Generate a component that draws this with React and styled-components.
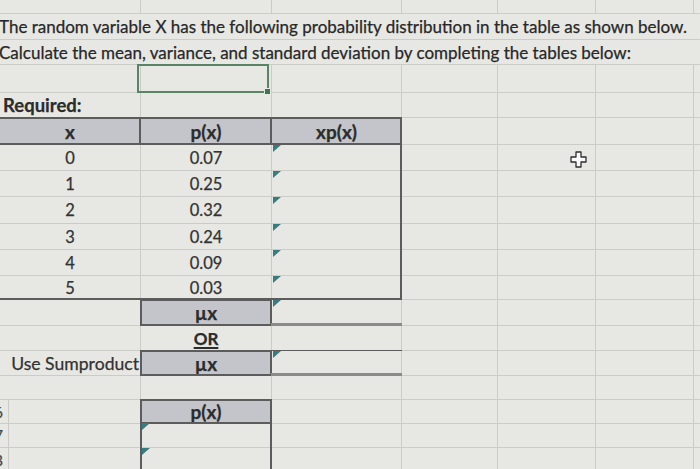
import React from 'react';
import styled, { createGlobalStyle, css } from 'styled-components';

const GRID = '#cbcbc7';
const DARK = '#5c5c5c';
const FILL = '#c3c5ca';
const TEAL = '#3a7b80';
const BG = '#e7e7e3';
const COLS = '9px 132px 131px 130px 96px 98px 98px 1fr';

const GlobalStyle = createGlobalStyle`
  html, body { margin: 0; padding: 0; background: ${BG}; }
  body {
    width: 700px; height: 469px; overflow: hidden;
    font-family: Lato, "Open Sans", sans-serif; color: #303030;
    -webkit-text-stroke: 0.25px currentColor;
  }
`;

const Sheet = styled.div`
  display: flex;
  flex-direction: column;
  width: 700px;
`;

const Row = styled.div`
  display: grid;
  grid-template-columns: ${COLS};
  height: ${(p) => p.$h}px;
  flex: none;
`;

const Cell = styled.div`
  position: relative;
  box-sizing: border-box;
  min-width: 0;
  grid-column: ${(p) => (p.$wide ? '1 / span 2' : 'auto')};
  display: flex;
  align-items: center;
  justify-content: ${(p) => (p.$align === 'right' ? 'flex-end' : p.$align === 'left' ? 'flex-start' : 'center')};
  padding: 0 ${(p) => (p.$align === 'right' ? 1 : 0)}px 0 ${(p) => (p.$align === 'left' ? 3 : 0)}px;
  border-right: 1px solid ${(p) => (p.$noRight ? 'transparent' : GRID)};
  border-bottom: 1px solid ${GRID};
  background: ${(p) => (p.$fill ? FILL : 'transparent')};
  font-size: ${(p) => (p.$bold ? 19 : 16.5)}px;
  font-weight: ${(p) => (p.$bold ? 700 : 400)};
  white-space: nowrap;
  color: ${(p) => (p.$bold ? '#2c2c2c' : '#333')};

  &::after {
    content: '';
    position: absolute;
    inset: -1px;
    pointer-events: none;
    border-style: solid;
    border-color: ${DARK};
    border-width: ${(p) => `${p.$bt || 0}px ${p.$br || 0}px ${p.$bb || 0}px ${p.$bl || 0}px`};
    ${(p) => p.$dbl && css`border-bottom: 3px solid #8b8b8b;`}
  }

  ${(p) =>
    p.$tri &&
    css`
      &::before {
        content: '';
        position: absolute;
        top: 0;
        left: 1px;
        width: 0;
        height: 0;
        border-top: 7px solid ${TEAL};
        border-right: 8px solid transparent;
      }
    `}
`;

const RowHead = styled(Cell)`
  overflow: hidden;
  justify-content: flex-end;
  padding-right: 5px;
  font-size: 15px;
  color: #444;
`;

const TitleCell = styled(Cell)`
  grid-column: 1 / -1;
  justify-content: flex-start;
  margin-left: -1px;
  font-size: 17px;
  color: #282828;
  overflow: visible;
`;

const Label = styled(Cell)`
  font-size: 18.5px;
`;

const SumLabel = styled(Cell)`
  font-size: 17.6px;
`;

const Underlined = styled.span`
  text-decoration: underline;
  text-decoration-thickness: 1.5px;
  text-underline-offset: 2px;
  font-size: 17px;
`;

const SelectBox = styled.div`
  position: absolute;
  inset: -1px 2px -1px -4px;
  border: 2px solid #5a8466;
  pointer-events: none;
`;

const Handle = styled.div`
  position: absolute;
  right: -4px;
  bottom: -4px;
  width: 5px;
  height: 5px;
  background: #3f7552;
  border: 1px solid ${BG};
`;

const CursorWrap = styled.div`
  position: absolute;
  right: 8px;
  top: 6px;
  width: 17px;
  height: 17px;
`;

function Cursor() {
  return (
    <CursorWrap>
      <svg width="17" height="17" viewBox="0 0 17 17">
        <polygon
          points="6,1 11,1 11,6 16,6 16,11 11,11 11,16 6,16 6,11 1,11 1,6 6,6"
          fill="#fafafa"
          stroke="#2e2e2e"
          strokeWidth="1.3"
          strokeLinejoin="round"
        />
      </svg>
    </CursorWrap>
  );
}

function Tail({ cross }) {
  return (
    <>
      <Cell />
      <Cell>{cross && <Cursor />}</Cell>
      <Cell />
      <Cell $noRight />
    </>
  );
}

const data = [
  ['0', '0.07'],
  ['1', '0.25'],
  ['2', '0.32'],
  ['3', '0.24'],
  ['4', '0.09'],
  ['5', '0.03'],
];
const dataHeights = [26, 26, 27, 26, 26, 24];

export default function App() {
  return (
    <>
      <GlobalStyle />
      <Sheet>
        <Row $h={14}>
          <Cell $wide />
          <Cell />
          <Cell />
          <Tail />
        </Row>
        <Row $h={26}>
          <TitleCell $noRight>
            The random variable X has the following probability distribution in the table as shown below.
          </TitleCell>
        </Row>
        <Row $h={25}>
          <TitleCell $noRight>
            Calculate the mean, variance, and standard deviation by completing the tables below:
          </TitleCell>
        </Row>
        <Row $h={28}>
          <Cell $wide />
          <Cell>
            <SelectBox>
              <Handle />
            </SelectBox>
          </Cell>
          <Cell />
          <Tail />
        </Row>
        <Row $h={25}>
          <Label $wide $bold $align="left">Required:</Label>
          <Cell />
          <Cell />
          <Tail />
        </Row>
        <Row $h={27}>
          <Cell $wide $fill $bold $bt={2} $bb={2} $br={2}>x</Cell>
          <Cell $fill $bold $bt={2} $bb={2} $br={2}>p(x)</Cell>
          <Cell $fill $bold $bt={2} $bb={2} $br={2}>xp(x)</Cell>
          <Tail />
        </Row>
        {data.map(([x, p], i) => {
          const last = i === data.length - 1;
          return (
            <Row key={x} $h={dataHeights[i]}>
              <Cell $wide $bb={last ? 2 : 0}>{x}</Cell>
              <Cell $bb={last ? 2 : 0}>{p}</Cell>
              <Cell $tri $br={2} $bb={last ? 2 : 0} />
              <Tail cross={i === 0} />
            </Row>
          );
        })}
        <Row $h={26}>
          <Cell $wide />
          <Cell $fill $bold $bt={2} $bb={2} $bl={2} $br={2}>µx</Cell>
          <Cell $tri $dbl />
          <Tail />
        </Row>
        <Row $h={25}>
          <Cell $wide />
          <Cell $bold>
            <Underlined>OR</Underlined>
          </Cell>
          <Cell />
          <Tail />
        </Row>
        <Row $h={25}>
          <SumLabel $wide $align="right">Use Sumproduct</SumLabel>
          <Cell $fill $bold $bt={2} $bb={2} $bl={2} $br={2}>µx</Cell>
          <Cell $tri $bt={1} $dbl />
          <Tail />
        </Row>
        <Row $h={24}>
          <Cell $wide />
          <Cell />
          <Cell />
          <Tail />
        </Row>
        <Row $h={23}>
          <RowHead>16</RowHead>
          <Cell />
          <Cell $fill $bold $bt={2} $bb={2} $bl={2} $br={2}>p(x)</Cell>
          <Cell />
          <Tail />
        </Row>
        <Row $h={25}>
          <RowHead>17</RowHead>
          <Cell />
          <Cell $tri $bl={2} $br={2} />
          <Cell />
          <Tail />
        </Row>
        <Row $h={25}>
          <RowHead>18</RowHead>
          <Cell />
          <Cell $tri $bl={2} $br={2} />
          <Cell />
          <Tail />
        </Row>
      </Sheet>
    </>
  );
}
